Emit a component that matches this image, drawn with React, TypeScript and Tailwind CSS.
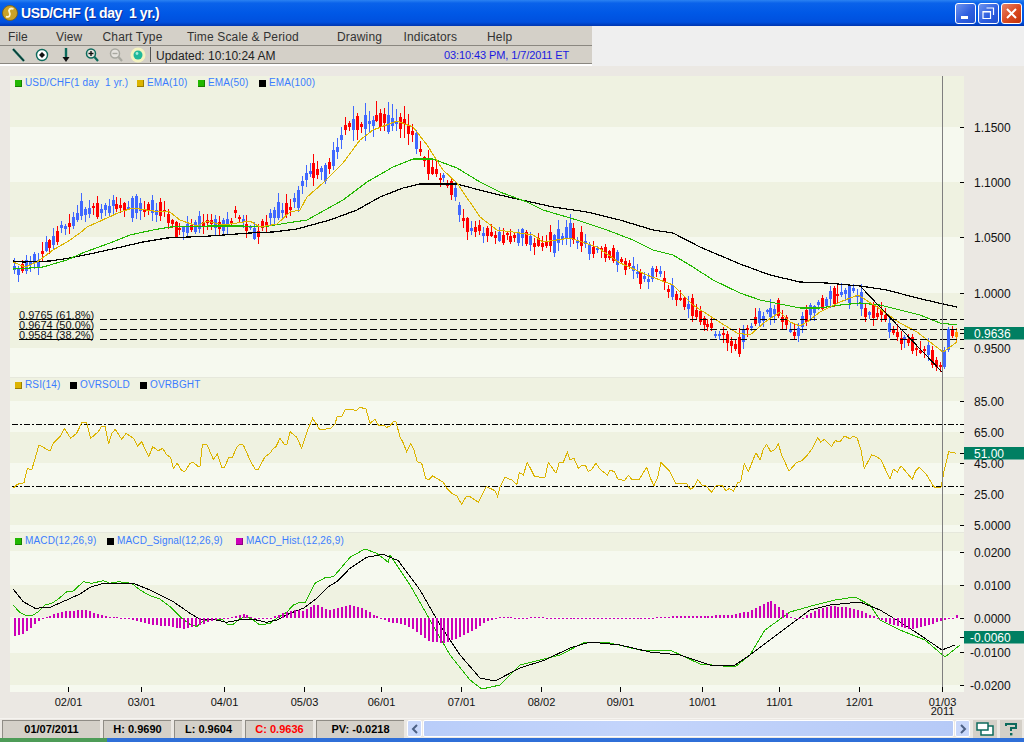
import React from "react";

type Pt = [number, number];

const pricePath: Pt[] = [
  [12, 272], [20, 272], [30, 265], [38, 260], [44, 244], [50, 240], [58, 232], [66, 228], [72, 222], [82, 210], [88, 208], [96, 212],
  [105, 208], [112, 206], [120, 208], [128, 206], [136, 205], [145, 208], [152, 208], [160, 212], [168, 215], [175, 225], [182, 232],
  [190, 228], [198, 226], [205, 222], [212, 220], [220, 230], [228, 222], [236, 214], [243, 220], [250, 230], [258, 230], [265, 222],
  [272, 212], [280, 212], [290, 208], [298, 198], [304, 180], [312, 168], [320, 172], [326, 172], [334, 158], [345, 130], [350, 125],
  [360, 122], [375, 120], [390, 122], [400, 120], [410, 132], [420, 148], [430, 170], [445, 180], [455, 195], [465, 225], [480, 232],
  [495, 235], [510, 238], [525, 235], [540, 245], [555, 240], [570, 232], [585, 245], [600, 252], [615, 258], [630, 268], [640, 278],
  [650, 278], [660, 272], [670, 290], [685, 305], [700, 318], [712, 330], [722, 335], [732, 345], [740, 342], [750, 325], [760, 318],
  [775, 308], [785, 320], [795, 335], [805, 320], [815, 305], [830, 298], [845, 295], [858, 292], [865, 315], [880, 312], [890, 328],
  [900, 338], [915, 345], [930, 355], [940, 368], [946, 358], [950, 335], [958, 332],
];

const ema10: Pt[] = [
  [13, 262], [25, 267], [37, 262], [53, 250], [67, 242], [80, 233], [87, 227], [107, 218], [120, 212], [133, 208], [153, 211], [170, 212],
  [180, 220], [197, 226], [207, 221], [223, 225], [237, 223], [250, 221], [260, 227], [277, 224], [290, 212], [300, 210], [307, 197],
  [323, 183], [343, 163], [360, 140], [373, 130], [397, 121], [413, 127], [427, 145], [443, 170], [457, 183], [480, 217], [497, 230],
  [513, 232], [533, 235], [543, 242], [570, 238], [597, 247], [620, 263], [647, 275], [660, 280], [673, 285], [693, 305], [713, 318],
  [737, 333], [750, 335], [765, 322], [780, 312], [790, 322], [800, 326], [807, 322], [820, 312], [840, 302], [858, 295], [877, 307],
  [900, 323], [917, 332], [943, 352], [957, 342],
];

const ema50: Pt[] = [
  [13, 269], [30, 268], [43, 267], [67, 260], [85, 252], [110, 243], [130, 235], [153, 230], [170, 227], [210, 226], [243, 226], [263, 227],
  [287, 223], [307, 220], [325, 210], [343, 200], [367, 182], [393, 167], [413, 159], [433, 159], [457, 168], [480, 182], [500, 192],
  [527, 202], [543, 210], [577, 220], [607, 230], [633, 240], [653, 250], [673, 255], [693, 267], [713, 280], [740, 293], [760, 300],
  [780, 304], [800, 308], [820, 308], [840, 305], [860, 303], [880, 305], [900, 310], [920, 315], [940, 323], [957, 325],
];

const ema100: Pt[] = [
  [13, 261], [23, 262], [50, 261], [70, 258], [90, 254], [117, 248], [143, 242], [167, 238], [210, 236], [250, 233], [273, 232], [297, 229],
  [330, 220], [357, 210], [380, 197], [403, 188], [420, 184], [457, 184], [487, 192], [517, 199], [553, 207], [587, 212], [620, 220],
  [653, 230], [673, 233], [700, 247], [740, 264], [770, 275], [800, 282], [827, 283], [860, 286], [887, 290], [917, 298], [943, 304], [957, 307],
];

const rsi: Pt[] = [
  ...[
    10, 265, 22, 253, 42, 248, 52, 205, 65, 210, 87, 135, 120, 153, 130, 130, 150, 110, 163, 85, 182, 115, 200, 100, 215, 68, 230, 67, 242, 115,
    265, 95, 275, 78, 285, 78, 296, 132, 305, 100, 316, 88, 335, 118, 348, 100, 372, 116, 383, 138, 395, 125, 416, 170, 428, 140, 445, 152,
    458, 145, 470, 165, 482, 172, 490, 205, 502, 190, 515, 212, 525, 214, 540, 190, 550, 187, 565, 200, 570, 198, 577, 135, 590, 132, 610, 178,
    622, 163, 635, 202, 643, 202, 657, 172, 667, 172, 680, 142, 690, 132, 700, 135, 720, 180, 735, 207, 745, 208, 765, 170, 780, 160, 790, 145,
    798, 140, 810, 115, 822, 132, 830, 135, 840, 95, 860, 112, 875, 145, 895, 85, 908, 55, 930, 90, 962, 85, 975, 72, 982, 48, 995, 50, 1005, 30,
    1030, 28, 1037, 33, 1050, 22, 1068, 27, 1080, 70, 1095, 58, 1105, 75, 1120, 75, 1130, 82, 1140, 78, 1150, 65, 1158, 65, 1170, 112, 1178, 125,
    1190, 155, 1202, 130, 1212, 150, 1222, 185, 1235, 190, 1247, 235, 1255, 240, 1268, 228, 1300, 247, 1310, 265, 1325, 280, 1340, 287, 1355, 313,
    1368, 290, 1380, 290, 1405, 307, 1428, 260, 1440, 265, 1455, 272, 1463, 290,
  ].reduce<Pt[]>((acc, v, i, a) => (i % 2 ? acc : [...acc, [10 + v / 3, 400 + a[i + 1] / 3] as Pt]), []),
  ...[
    0, 260, 15, 232, 35, 240, 50, 255, 58, 217, 70, 225, 82, 187, 103, 228, 120, 232, 135, 232, 145, 187, 168, 220, 178, 187, 190, 187, 202, 157,
    210, 180, 222, 175, 235, 205, 247, 195, 257, 197, 265, 215, 275, 208, 288, 190, 300, 208, 322, 225, 330, 210, 343, 215, 353, 237, 373, 242,
    385, 226, 395, 238, 418, 238, 440, 202, 450, 232, 462, 257, 473, 232, 483, 187, 510, 215, 527, 250, 560, 250, 570, 268, 582, 262, 593, 238,
    605, 255, 618, 258, 635, 277, 648, 257, 668, 258, 678, 273, 688, 265, 700, 273, 713, 248, 722, 245, 733, 190, 745, 215, 768, 158, 780, 180,
    790, 148, 800, 133, 812, 155, 825, 148, 835, 132, 845, 165, 867, 213, 890, 187, 905, 182, 920, 168, 935, 148, 953, 112, 962, 127, 973, 118,
    995, 140, 1005, 122, 1020, 125, 1033, 108, 1050, 116, 1060, 108, 1072, 115, 1083, 150, 1093, 205, 1115, 165, 1130, 170, 1143, 180, 1170, 238,
    1180, 207, 1192, 217, 1203, 197, 1237, 238, 1247, 212, 1258, 202, 1280, 225, 1298, 255, 1305, 262, 1323, 262, 1333, 210, 1346, 155, 1368, 160,
  ].reduce<Pt[]>((acc, v, i, a) => (i % 2 ? acc : [...acc, [500 + v / 3, 400 + a[i + 1] / 3] as Pt]), []),
];

const macd: Pt[] = [
  ...[
    40, 226, 60, 248, 80, 257, 95, 258, 115, 245, 135, 225, 155, 220, 175, 207, 200, 185, 220, 183, 250, 155, 275, 160, 310, 152, 330, 160, 355, 155,
    395, 160, 420, 180, 450, 197, 480, 207, 510, 230, 545, 265, 570, 283, 590, 290, 610, 272, 640, 267, 670, 270, 680, 282, 700, 283, 720, 265,
    745, 262, 760, 270, 780, 285, 810, 280, 830, 265, 860, 247, 880, 225, 900, 217, 915, 218, 945, 160, 975, 143, 1000, 140, 1020, 118, 1050, 82,
    1095, 57, 1130, 70, 1165, 97,
  ].reduce<Pt[]>((acc, v, i, a) => (i % 2 ? acc : [...acc, [v / 3, 530 + a[i + 1] / 3] as Pt]), []),
  [390, 555], [410, 585], [430, 620], [450, 655], [470, 680], [482, 689], [500, 685], [520, 665], [540, 660], [560, 655], [585, 642], [610, 643],
  [640, 650], [670, 650], [700, 664], [735, 667], [750, 655], [765, 630], [790, 612], [815, 605], [835, 600], [855, 597], [870, 605], [880, 620],
  [900, 630], [925, 640], [945, 657], [960, 645],
];

const signal: Pt[] = [
  ...[
    40, 178, 70, 215, 105, 235, 150, 232, 200, 210, 240, 192, 270, 172, 310, 160, 400, 160, 450, 180, 520, 215, 570, 250, 600, 268, 640, 268, 680, 277,
    730, 268, 760, 268, 800, 277, 830, 270, 870, 250, 910, 235, 950, 205, 985, 170, 1010, 155, 1050, 115, 1100, 82, 1150, 73, 1195, 92,
  ].reduce<Pt[]>((acc, v, i, a) => (i % 2 ? acc : [...acc, [v / 3, 530 + a[i + 1] / 3] as Pt]), []),
  [420, 590], [440, 625], [460, 655], [480, 678], [495, 681], [520, 668], [545, 660], [570, 648], [590, 642], [620, 645], [650, 652], [680, 655],
  [710, 665], [735, 665], [750, 655], [770, 640], [790, 625], [810, 610], [830, 605], [860, 602], [880, 610], [900, 622], [920, 635], [942, 650], [955, 645],
];

const histPath: Pt[] = [
  [12, -18], [20, -17], [30, -10], [40, -1], [45, 1], [63, 7], [85, 8], [100, 3], [110, 1], [122, 0], [133, -2], [150, -7], [167, -8], [183, -11],
  [200, -7], [213, -2], [233, 1], [243, 4], [253, 0], [270, 0], [283, 5], [293, 8], [303, 7], [315, 14], [328, 8], [350, 13], [363, 9], [377, 1],
  [390, -5], [398, -5], [410, -10], [430, -24], [445, -25], [470, -14], [485, -4], [500, 1], [520, 0], [540, 1], [560, -1], [600, -1], [640, -1],
  [660, 1], [680, 2], [700, 2], [730, 3], [750, 7], [770, 17], [780, 10], [790, 1], [800, -1], [815, 8], [830, 12], [850, 10], [860, 7], [875, 1],
  [890, -6], [910, -12], [925, -8], [940, -3], [950, -1], [957, 4],
];

const interp = (path: Pt[], x: number) => {
  if (x <= path[0][0]) return path[0][1];
  for (let i = 1; i < path.length; i++) {
    if (x <= path[i][0]) {
      const [x0, y0] = path[i - 1];
      const [x1, y1] = path[i];
      return y0 + ((y1 - y0) * (x - x0)) / (x1 - x0);
    }
  }
  return path[path.length - 1][1];
};

const points = (path: Pt[]) => path.map(([x, y]) => `${x.toFixed(1)},${y.toFixed(1)}`).join(" ");

// fixed seed, so the candles come out the same each load
let seed = 11;
const rnd = () => {
  seed = (seed * 16807) % 2147483647;
  return seed / 2147483647;
};

const BAR_COUNT = 240;
const barX = (i: number) => Math.round(14 + 3.94 * i);

type Candle = { x: number; top: number; bottom: number; high: number; low: number; color: string };

const lastBars: Record<number, Omit<Candle, "x">> = {
  233: { top: 350, bottom: 365, high: 346, low: 368, color: "#ff0000" },
  234: { top: 360, bottom: 367, high: 357, low: 371, color: "#ff0000" },
  235: { top: 365, bottom: 367, high: 362, low: 372, color: "#ff0000" },
  236: { top: 350, bottom: 367, high: 347, low: 369, color: "#4068ff" },
  237: { top: 329, bottom: 350, high: 327, low: 352, color: "#4068ff" },
  238: { top: 329, bottom: 336, high: 326, low: 338, color: "#ff0000" },
  239: { top: 332, bottom: 337, high: 328, low: 343, color: "#ff9900" },
};

const candles: Candle[] = Array.from({ length: BAR_COUNT }, (_, i) => {
  const x = barX(i);
  const mid = interp(pricePath, x) + (rnd() - 0.5) * 8;
  const slope = interp(pricePath, x) - interp(pricePath, x - 4);
  const body = 2 + rnd() * rnd() * 20;
  const up = rnd() < (slope > 0 ? 0.3 : 0.65);
  const top = Math.round(mid - body / 2);
  const bottom = Math.round(mid + body / 2);
  const reach = x > 330 && x < 410 ? 14 : 8;
  const fixed = lastBars[i];
  if (fixed) return { x, ...fixed };
  return {
    x,
    top,
    bottom,
    high: Math.round(top - 1 - rnd() * reach),
    low: Math.round(bottom + 1 + rnd() * reach),
    color: up ? "#4068ff" : "#ff0000",
  };
});

const bands = [
  [76, 127, 1], [127, 182, 0], [182, 237, 1], [237, 293, 0], [293, 348, 1], [348, 377, 0],
  [378, 401, 1], [401, 432, 0], [432, 463, 1], [463, 494, 0], [494, 525, 1], [525, 533, 0],
  [533, 551, 1], [551, 585, 0], [585, 617, 1], [617, 653, 0], [653, 685, 1], [685, 692, 0],
];

const axisLabels: [string, number][] = [
  ["1.1500", 127], ["1.1000", 182], ["1.0500", 237], ["1.0000", 293], ["0.9500", 348],
  ["85.00", 401], ["65.00", 432], ["45.00", 463], ["25.00", 494], ["5.0000", 525],
  ["0.0200", 552], ["0.0100", 585], ["0.0000", 618], ["-0.0100", 652], ["-0.0200", 685],
];

const dates: [string, number][] = [
  ["02/01", 68], ["03/01", 141], ["04/01", 224], ["05/03", 304], ["06/01", 381], ["07/01", 461],
  ["08/02", 541], ["09/01", 620], ["10/01", 702], ["11/01", 779], ["12/01", 859], ["01/03", 942],
];

const tags: [string, number][] = [["0.9636", 327], ["51.00", 447], ["-0.0060", 631]];

const fibs: [string, number][] = [["0.9765 (61.8%)", 319], ["0.9674 (50.0%)", 329], ["0.9584 (38.2%)", 339]];

function Chart() {
  return (
    <svg width={1024} height={652} viewBox="0 66 1024 652" className="block">
      {bands.map(([y0, y1, dark]) => (
        <rect key={y0} x={10} y={y0} width={954} height={y1 - y0} fill={dark ? "#eff2e1" : "#f6f9ef"} />
      ))}
      <rect x={10} y={377} width={954} height={1} fill="#e6e8dc" />
      <rect x={10} y={532} width={954} height={1} fill="#e6e8dc" />

      {candles.map((c) => (
        <g key={c.x} fill={c.color} shapeRendering="crispEdges">
          <rect x={c.x} y={c.high} width={1} height={c.low - c.high} />
          <rect x={c.x - 1} y={c.top} width={3} height={Math.max(c.bottom - c.top, 1)} />
        </g>
      ))}

      <g fill="none" shapeRendering="crispEdges">
        <polyline points={points(ema100)} stroke="#000000" strokeWidth={1.2} />
        <polyline points={points(ema50)} stroke="#22b800" strokeWidth={1.1} />
        <polyline points={points(ema10)} stroke="#dcb400" strokeWidth={1.1} />
        <line x1={860} y1={286} x2={943} y2={373} stroke="#000000" />
        {fibs.map(([label, y]) => (
          <g key={label}>
            <line x1={19} y1={y + 0.5} x2={93} y2={y + 0.5} stroke="#000000" />
            <line x1={100} y1={y + 0.5} x2={964} y2={y + 0.5} stroke="#000000" strokeDasharray="7 3" />
          </g>
        ))}
        <line x1={12} y1={424.5} x2={964} y2={424.5} stroke="#000000" strokeDasharray="6 2 2 2" />
        <line x1={12} y1={486.5} x2={964} y2={486.5} stroke="#000000" strokeDasharray="6 2 2 2" />
        <polyline points={points(rsi)} stroke="#dcb400" />
        <polyline points={points(macd)} stroke="#22b800" />
        <polyline points={points(signal)} stroke="#000000" />
        <line x1={942.5} y1={76} x2={942.5} y2={692} stroke="#7f7f7f" />
      </g>

      {Array.from({ length: BAR_COUNT }, (_, i) => {
        const x = barX(i);
        const h = Math.round(interp(histPath, x));
        if (h === 0) return <rect key={x} x={x} y={618} width={2} height={1} fill="#cc00b8" shapeRendering="crispEdges" />;
        return (
          <rect key={x} x={x} y={h > 0 ? 618 - h : 618} width={2} height={Math.abs(h)} fill="#cc00b8" shapeRendering="crispEdges" />
        );
      })}

      {fibs.map(([label, y]) => (
        <text key={label} x={19} y={y} fontSize={11} fill="#111111">
          {label}
        </text>
      ))}

      {axisLabels.map(([label, y]) => (
        <g key={label}>
          <rect x={960} y={y} width={4} height={1} fill="#000000" />
          <text x={label.startsWith("-") ? 970 : 974} y={y + 4.5} fontSize={12} fill="#111111">
            {label}
          </text>
        </g>
      ))}

      {dates.map(([label, x]) => (
        <g key={label}>
          <rect x={x} y={687} width={1} height={5} fill="#000000" />
          <text x={x + 0.5} y={706} fontSize={11} textAnchor="middle" fill="#111111">
            {label}
          </text>
        </g>
      ))}
      <text x={942.5} y={715} fontSize={11} textAnchor="middle" fill="#111111">
        2011
      </text>

      {tags.map(([label, y]) => (
        <g key={label}>
          <rect x={960} y={y + 6} width={4} height={1} fill="#000000" />
          <rect x={964} y={y} width={60} height={12.5} fill="#007f62" />
          <text x={label.startsWith("-") ? 970 : 974} y={y + 10.5} fontSize={12} fill="#ffffff">
            {label}
          </text>
        </g>
      ))}
    </svg>
  );
}

function Legend({ items, className }: { items: { color: string; label: string; w: string }[]; className: string }) {
  return (
    <div className={`absolute left-[15px] flex items-center text-[10px] leading-3 tracking-[0.15px] text-[#3a7cff] ${className}`}>
      {items.map((item) => (
        <div key={item.label} className={`flex items-center gap-[3px] whitespace-pre ${item.w}`}>
          <span className={`h-[7px] w-[7px] border-r border-b border-black/30 ${item.color}`} />
          <span>{item.label}</span>
        </div>
      ))}
    </div>
  );
}

function PencilIcon() {
  return (
    <svg width="14" height="16" viewBox="0 0 14 16">
      <path d="M1 2 L12 14" stroke="#0c6a5c" strokeWidth="2.4" />
      <path d="M1 2 L12 14" stroke="#111111" strokeWidth="0.8" />
    </svg>
  );
}

function TargetIcon() {
  return (
    <svg width="14" height="16" viewBox="0 0 14 16">
      <circle cx="7" cy="8" r="5.5" fill="#ffffff" stroke="#0c6a5c" strokeWidth="1.4" />
      <path d="M7 5 L10 8 L7 11 L4 8 Z" fill="#111111" />
    </svg>
  );
}

function ArrowIcon() {
  return (
    <svg width="10" height="16" viewBox="0 0 10 16">
      <path d="M5 1 V11" stroke="#0c6a5c" strokeWidth="2.4" />
      <path d="M1.5 10 H8.5 L5 15 Z" fill="#111111" />
    </svg>
  );
}

function ZoomIcon({ color, plus, mark }: { color: string; plus?: boolean; mark: string }) {
  return (
    <svg width="14" height="16" viewBox="0 0 14 16">
      <circle cx="6" cy="6.5" r="4.5" fill="#ffffff" fillOpacity="0.4" stroke={color} strokeWidth="1.5" />
      <path d="M9.5 10 L13 14" stroke={color} strokeWidth="2.2" />
      <path d="M3.5 6.5 H8.5" stroke={mark} strokeWidth="1.4" />
      {plus && <path d="M6 4 V9" stroke={mark} strokeWidth="1.4" />}
    </svg>
  );
}

function StatusBall() {
  return (
    <svg width="16" height="16" viewBox="0 0 16 16">
      <circle cx="8" cy="8" r="7.5" fill="#f4f2c0" />
      <circle cx="8" cy="8" r="4.5" fill="#1fb89a" />
      <circle cx="7" cy="6.5" r="1.4" fill="#a5ecd9" />
    </svg>
  );
}

function WinButton({ red, children }: { red?: boolean; children: React.ReactNode }) {
  return (
    <div
      className={`flex h-[21px] w-[21px] items-center justify-center rounded-[3px] border border-white ${
        red
          ? "bg-[linear-gradient(135deg,#e8836a,#d9491f_55%,#c23208)]"
          : "bg-[linear-gradient(135deg,#6f94ee,#2f5fe0_55%,#2050d0)]"
      }`}
    >
      {children}
    </div>
  );
}

function Scroller() {
  return (
    <div className="flex h-[17px] w-[567px] items-center gap-[1px] self-center">
      <div className="flex h-[17px] w-[15px] items-center justify-center rounded-[2px] border border-white bg-[#c9d8fb]">
        <svg width="8" height="10" viewBox="0 0 8 10">
          <path d="M6 1 L2 5 L6 9" fill="none" stroke="#4d6185" strokeWidth="2" />
        </svg>
      </div>
      <div className="h-[17px] flex-1 rounded-[2px] border border-white bg-[linear-gradient(90deg,#b9cdf9,#c3d4fb_40%,#b6caf7)]" />
      <div className="flex h-[17px] w-[15px] items-center justify-center rounded-[2px] border border-white bg-[#c9d8fb]">
        <svg width="8" height="10" viewBox="0 0 8 10">
          <path d="M2 1 L6 5 L2 9" fill="none" stroke="#4d6185" strokeWidth="2" />
        </svg>
      </div>
    </div>
  );
}

const menus = [
  { label: "File", w: "w-[48px]" },
  { label: "View", w: "w-[46.5px]" },
  { label: "Chart Type", w: "w-[84.5px]" },
  { label: "Time Scale & Period", w: "w-[150px]" },
  { label: "Drawing", w: "w-[66.5px]" },
  { label: "Indicators", w: "w-[83.5px]" },
  { label: "Help", w: "w-[50px]" },
];

const cells = [
  { label: "01/07/2011", w: "w-[98px]", color: "text-black" },
  { label: "H: 0.9690", w: "w-[68px]", color: "text-black" },
  { label: "L: 0.9604", w: "w-[68px]", color: "text-black" },
  { label: "C: 0.9636", w: "w-[68px]", color: "text-[#ff0000]" },
  { label: "PV: -0.0218", w: "w-[88px]", color: "text-black" },
];

export default function App() {
  return (
    <div className="flex h-[742px] w-[1024px] flex-col overflow-hidden bg-[#ebe8e3] font-['Liberation_Sans',Arial,sans-serif]">
      <div className="flex h-[26px] shrink-0 items-center justify-between bg-[linear-gradient(180deg,#2b82f2_0%,#0a62ea_12%,#0058e6_50%,#0050de_85%,#0036b0_100%)] pl-[2px] pr-[2px]">
        <div className="flex items-center gap-[3px]">
          <svg width="16" height="16" viewBox="0 0 16 16">
            <circle cx="8" cy="8" r="7.5" fill="#c9a227" stroke="#7a5c10" strokeWidth="0.8" />
            <path d="M11.5 4 C8 2.5 6 5 7.5 7.5 C9 10 7 13 4 11.5" fill="none" stroke="#fff6d0" strokeWidth="1.8" />
          </svg>
          <span className="whitespace-pre text-[14px] font-bold tracking-[-0.4px] text-white [text-shadow:1px_1px_0_#0a2f9a]">
            USD/CHF (1 day  1 yr.)
          </span>
        </div>
        <div className="flex gap-[2px]">
          <WinButton>
            <span className="mt-[9px] mr-[3px] h-[3px] w-[7px] bg-white" />
          </WinButton>
          <WinButton>
            <svg width="13" height="13" viewBox="0 0 13 13">
              <path d="M4.5 1 H11.5 V8 M1 4.5 H8.5 V11.5 H1 Z M1 5 H8.5" fill="none" stroke="#ffffff" strokeWidth="1.2" />
            </svg>
          </WinButton>
          <WinButton red>
            <svg width="13" height="13" viewBox="0 0 13 13">
              <path d="M2 2 L11 11 M11 2 L2 11" stroke="#ffffff" strokeWidth="2" />
            </svg>
          </WinButton>
        </div>
      </div>

      <div className="flex h-[40px] shrink-0 bg-[#efefef]">
        <div className="flex w-[592px] flex-col">
          <div className="flex h-[20px] items-center border-b border-[#8a8780] bg-[#d4d0c8] pl-[8px] pt-[3px] text-[12px] tracking-[0.15px] text-[#333333]">
            {menus.map((m) => (
              <span key={m.label} className={`whitespace-nowrap ${m.w}`}>
                {m.label}
              </span>
            ))}
          </div>
          <div className="flex h-[18px] items-center border-b border-[#8a8780] bg-[#d4d0c8] pl-[12px]">
            <div className="flex w-[23px]"><PencilIcon /></div>
            <div className="flex w-[26px]"><TargetIcon /></div>
            <div className="flex w-[24px]"><ArrowIcon /></div>
            <div className="flex w-[24px]"><ZoomIcon color="#0c6a5c" mark="#111111" plus /></div>
            <div className="flex w-[21px]"><ZoomIcon color="#a8a8a0" mark="#a8a8a0" /></div>
            <div className="flex w-[20px]"><StatusBall /></div>
            <div className="h-[15px] w-[1px] bg-[#555555]" />
            <span className="ml-[5px] mt-[2px] w-[288px] text-[12px] text-[#222222]">Updated: 10:10:24 AM</span>
            <span className="mt-[2px] text-[11px] tracking-[-0.1px] text-[#1a1ae0]">03:10:43 PM, 1/7/2011 ET</span>
          </div>
          <div className="h-[2px] bg-white" />
        </div>
      </div>

      <div className="relative h-[652px] shrink-0">
        <Chart />
        <Legend
          className="top-[11px]"
          items={[
            { color: "bg-[#22b800]", label: "USD/CHF(1 day  1 yr.)", w: "w-[122px]" },
            { color: "bg-[#dcb400]", label: "EMA(10)", w: "w-[61px]" },
            { color: "bg-[#22b800]", label: "EMA(50)", w: "w-[61px]" },
            { color: "bg-black", label: "EMA(100)", w: "w-[70px]" },
          ]}
        />
        <Legend
          className="top-[313px]"
          items={[
            { color: "bg-[#dcb400]", label: "RSI(14)", w: "w-[55px]" },
            { color: "bg-black", label: "OVRSOLD", w: "w-[70px]" },
            { color: "bg-black", label: "OVRBGHT", w: "w-[70px]" },
          ]}
        />
        <Legend
          className="top-[469px]"
          items={[
            { color: "bg-[#22b800]", label: "MACD(12,26,9)", w: "w-[92px]" },
            { color: "bg-black", label: "MACD_Signal(12,26,9)", w: "w-[129px]" },
            { color: "bg-[#cc00b8]", label: "MACD_Hist.(12,26,9)", w: "w-[120px]" },
          ]}
        />
      </div>

      <div className="flex h-[20px] shrink-0 items-center gap-[3px] border-t border-[#f6f4f0] pl-[2px] pr-[2px]">
        <div className="flex h-[18px] gap-[3px] self-end">
          {cells.map((c) => (
            <div
              key={c.label}
              className={`flex items-center justify-center border-t border-l border-[#8f8c85] bg-[#d4d0c8] text-[11px] font-bold ${c.w} ${c.color}`}
            >
              {c.label}
            </div>
          ))}
        </div>
        <Scroller />
        <div className="flex h-[18px] w-[24px] items-center justify-center bg-[#d4d0c8]">
          <svg width="18" height="14" viewBox="0 0 18 14">
            <rect x="5" y="4" width="12" height="9" fill="#ffffff" stroke="#0c6a5c" strokeWidth="1.5" />
            <rect x="1" y="1" width="11" height="7" fill="#ffffff" stroke="#0c6a5c" strokeWidth="1.5" />
          </svg>
        </div>
        <div className="flex h-[18px] w-[22px] items-center justify-center bg-[#d4d0c8]">
          <svg width="16" height="14" viewBox="0 0 16 14">
            <path d="M3 4 V2 H13 V6 H8 V9" fill="none" stroke="#0c6a5c" strokeWidth="2" />
            <rect x="7" y="11" width="2.4" height="2.4" fill="#0c6a5c" />
          </svg>
        </div>
      </div>

      <div className="flex h-[4px] shrink-0">
        <div className="w-[107px] bg-[#4d9c57]" />
        <div className="flex-1 bg-[#2f6fd8]" />
      </div>
    </div>
  );
}
